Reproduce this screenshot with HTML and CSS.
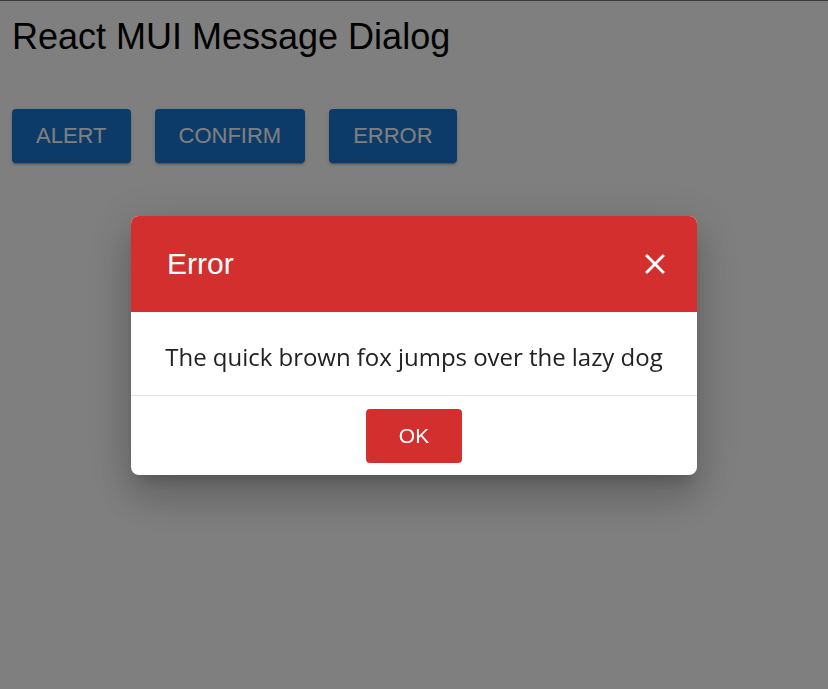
FILE: index.html
```html
<!DOCTYPE html>
<html lang="en">
<head>
<meta charset="utf-8">
<title>React MUI Message Dialog</title>
<link rel="stylesheet" href="styles.css">
</head>
<body>
<div class="app">
  <h1 class="title">React MUI Message Dialog</h1>
  <div class="actions">
    <button class="btn">Alert</button>
    <button class="btn">Confirm</button>
    <button class="btn">Error</button>
  </div>
</div>
<div class="backdrop">
  <div class="dialog" role="dialog">
    <div class="dialog-head">
      <span class="dialog-title">Error</span>
      <span class="close" aria-label="close">
        <svg width="24" height="24" viewBox="0 0 24 24"><path d="M19 6.41 17.59 5 12 10.59 6.41 5 5 6.41 10.59 12 5 17.59 6.41 19 12 13.41 17.59 19 19 17.59 13.41 12z" fill="#fff"/></svg>
      </span>
    </div>
    <div class="dialog-body">The quick brown fox jumps over the lazy dog</div>
    <div class="dialog-foot">
      <button class="ok">OK</button>
    </div>
  </div>
</div>
</body>
</html>
```
FILE: styles.css
```css
html, body {
  margin: 0;
  padding: 0;
  height: 100%;
}
body {
  background: #fff;
  font-family: "Liberation Sans", Arial, sans-serif;
  border-top: 1px solid #787878;
  box-sizing: border-box;
}
.app {
  padding: 12px;
}
.title {
  margin: 3px 0 0 0;
  font-size: 36px;
  font-weight: 400;
  line-height: 42px;
  color: #000;
}
.actions {
  display: flex;
  gap: 24px;
  margin-top: 51px;
}
.btn {
  font-family: "Liberation Sans", Arial, sans-serif;
  font-size: 22px;
  text-transform: uppercase;
  color: #fff;
  background: #1976d2;
  border: none;
  border-radius: 4px;
  height: 54px;
  padding: 0 24px;
  box-shadow: 0 3px 1px -2px rgba(0,0,0,.2), 0 2px 2px 0 rgba(0,0,0,.14), 0 1px 5px 0 rgba(0,0,0,.12);
}
.backdrop {
  position: fixed;
  inset: 0;
  padding-top: 2px;
  background: rgba(0,0,0,.5);
  display: flex;
  align-items: center;
  justify-content: center;
}
.dialog {
  width: 566px;
  background: #fff;
  border-radius: 8px;
  overflow: hidden;
  box-shadow: 0 11px 15px -7px rgba(0,0,0,.2), 0 24px 38px 3px rgba(0,0,0,.14), 0 9px 46px 8px rgba(0,0,0,.12);
}
.dialog-head {
  background: #d32f2f;
  height: 96px;
  display: flex;
  align-items: center;
  justify-content: space-between;
  padding: 0 25px 0 36px;
  color: #fff;
}
.dialog-title {
  font-size: 30px;
}
.close {
  display: flex;
}
.close svg {
  width: 34px;
  height: 34px;
}
.dialog-body {
  height: 84px;
  padding-top: 6px;
  display: flex;
  align-items: center;
  justify-content: center;
  font-family: "Open Sans", sans-serif;
  font-size: 24px;
  letter-spacing: -0.03px;
  color: #222;
  border-bottom: 1px solid #e0e0e0;
  box-sizing: border-box;
}
.dialog-foot {
  display: flex;
  justify-content: center;
  padding: 13px 0 12px;
}
.ok {
  font-family: "Liberation Sans", Arial, sans-serif;
  font-size: 21px;
  color: #fff;
  background: #d32f2f;
  border: none;
  border-radius: 4px;
  width: 96px;
  height: 54px;
}
```
